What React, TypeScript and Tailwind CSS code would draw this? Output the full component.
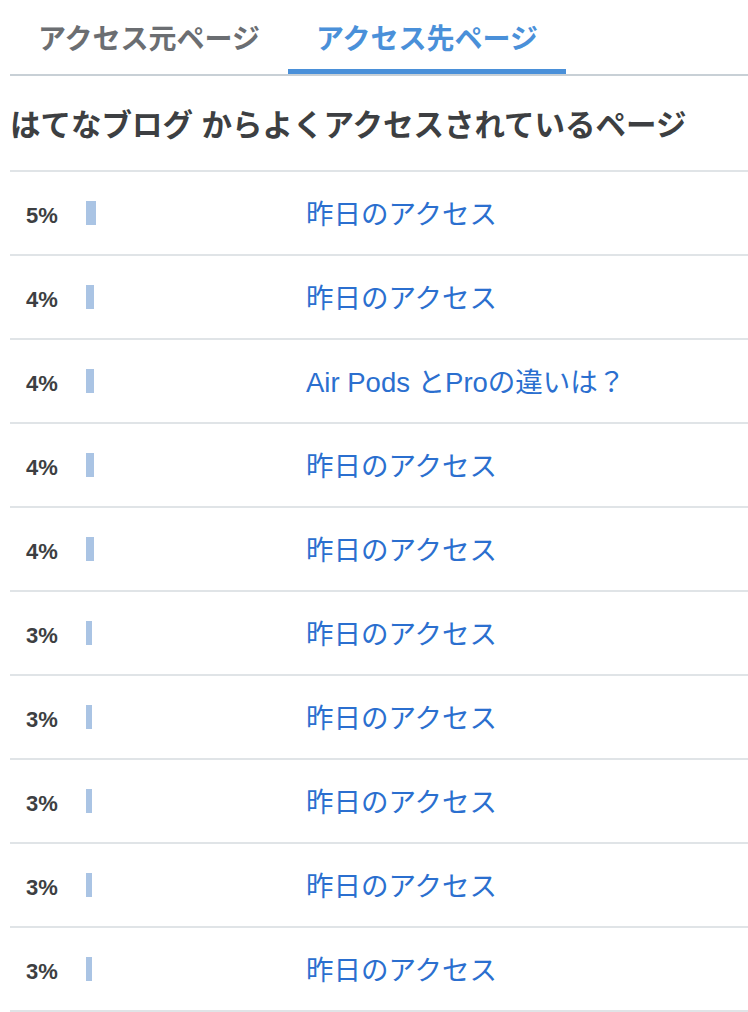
const rows = [
  { pct: 5, title: '昨日のアクセス' },
  { pct: 4, title: '昨日のアクセス' },
  { pct: 4, title: 'Air Pods とProの違いは？' },
  { pct: 4, title: '昨日のアクセス' },
  { pct: 4, title: '昨日のアクセス' },
  { pct: 3, title: '昨日のアクセス' },
  { pct: 3, title: '昨日のアクセス' },
  { pct: 3, title: '昨日のアクセス' },
  { pct: 3, title: '昨日のアクセス' },
  { pct: 3, title: '昨日のアクセス' },
];

const font = { fontFamily: '"Liberation Sans", "Noto Sans CJK JP", sans-serif' };

export default function App() {
  return (
    <div className="min-h-screen bg-white pl-[10px]" style={font}>
      {/* Tabs */}
      <div className="flex border-b-2 border-[#c8d0d6]">
        <button className="w-[278px] h-[74px] flex items-center justify-center text-[28px] font-bold text-[#6b6e72] pt-[6px]">
          アクセス元ページ
        </button>
        <button className="w-[278px] h-[74px] flex items-center justify-center text-[28px] font-bold text-[#4a90d9] border-b-[5px] border-[#4a90d9] pt-[11px]">
          アクセス先ページ
        </button>
      </div>

      {/* Heading */}
      <h2 className="h-[96px] flex items-center pt-[6px] text-[30.5px] font-bold text-[#3d3f42] border-b-2 border-[#e0e4e7]">
        はてなブログ からよくアクセスされているページ
      </h2>

      {/* Rows */}
      <div>
        {rows.map((row, i) => (
          <div key={i} className="h-[84px] flex items-center border-b-2 border-[#e0e4e7]">
            <span className="w-[76px] pl-[16px] pt-[4px] text-[22px] font-bold text-[#3d3f42]">{row.pct}%</span>
            <div className="w-[220px] flex items-center">
              <div className="h-[24px] bg-[#aac4e4]" style={{ width: row.pct * 2 }} />
            </div>
            <a href="#" className="pt-[3px] text-[27.5px] text-[#2b6fcf]">
              {row.title}
            </a>
          </div>
        ))}
      </div>
    </div>
  );
}
